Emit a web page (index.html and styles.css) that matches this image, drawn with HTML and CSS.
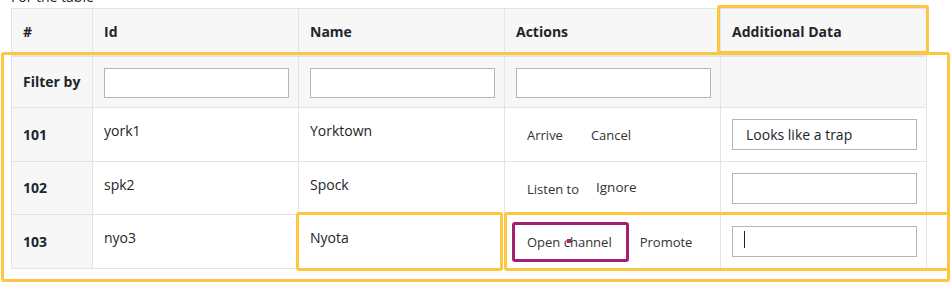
FILE: index.html
```html
<!DOCTYPE html>
<html lang="en">

<head>
    <meta charset="UTF-8">
    <meta name="viewport" content="width=device-width, initial-scale=1.0">
    <title>Crew table</title>
    <link rel="stylesheet" href="styles.css">
</head>

<body>
    <div class="sheet">
        <div class="caption">For the table</div>
        <table class="crew">
            <thead>
                <tr>
                    <th class="c-num">#</th>
                    <th class="c-id">Id</th>
                    <th class="c-name">Name</th>
                    <th class="c-actions">Actions</th>
                    <th class="c-extra">Additional Data</th>
                </tr>
            </thead>
            <tbody>
                <tr class="filters">
                    <th>Filter by</th>
                    <td><input type="text" class="field"></td>
                    <td><input type="text" class="field"></td>
                    <td><input type="text" class="field field-wide"></td>
                    <td></td>
                </tr>
                <tr>
                    <th>101</th>
                    <td>york1</td>
                    <td>Yorktown</td>
                    <td class="actions">
                        <div class="btn-row"><button class="link-btn">Arrive</button><button class="link-btn">Cancel</button></div>
                    </td>
                    <td><input type="text" class="field" value="Looks like a trap"></td>
                </tr>
                <tr class="short">
                    <th>102</th>
                    <td>spk2</td>
                    <td>Spock</td>
                    <td class="actions">
                        <div class="btn-row"><button class="link-btn">Listen to</button><button class="link-btn link-btn-tight">Ignore</button></div>
                    </td>
                    <td><input type="text" class="field"></td>
                </tr>
                <tr>
                    <th>103</th>
                    <td>nyo3</td>
                    <td>Nyota</td>
                    <td class="actions">
                        <div class="btn-row"><button class="link-btn">Open channel</button><button class="link-btn">Promote</button></div>
                    </td>
                    <td><input type="text" class="field"></td>
                </tr>
            </tbody>
        </table>

        <!-- highlight boxes drawn on top of the table -->
        <div class="mark mark-head"></div>
        <div class="mark mark-body"></div>
        <div class="mark mark-name"></div>
        <div class="mark mark-row"></div>
        <div class="mark mark-btn"></div>
        <div class="click-dot"></div>
        <div class="caret"></div>
    </div>
</body>

</html>
```

FILE: styles.css
```css
* {
    margin: 0;
    padding: 0;
    box-sizing: border-box;
}

body {
    font-family: "Open Sans", "Liberation Sans", sans-serif;
    font-size: 14px;
    color: #212529;
    background: #fff;
}

.sheet {
    position: relative;
    width: 951px;
    height: 286px;
    padding-left: 11px;
    overflow: hidden;
}

.caption {
    font-size: 14px;
    line-height: 20px;
    margin-top: -13px;
    margin-bottom: 1px;
}

.crew {
    width: 915px;
    border-collapse: collapse;
    table-layout: fixed;
}

.crew th,
.crew td {
    border: 1px solid #e3e4e8;
    padding: 11px 11px;
    line-height: 24px;
    text-align: left;
    vertical-align: top;
}

.crew th {
    font-weight: 700;
    white-space: nowrap;
}

.crew thead th {
    background: #f7f7f7;
    border-bottom: 2px solid #e3e4e8;
}

.c-num { width: 81px; }
.c-id { width: 206px; }
.c-name { width: 206px; }
.c-actions { width: 216px; }
.c-extra { width: 206px; }

.crew tbody th {
    background: #f7f7f7;
    vertical-align: middle;
}

.filters td {
    background: #f7f7f7;
    padding-top: 11px;
    padding-bottom: 9px;
}

.short td {
    padding-bottom: 10px;
}

.field {
    display: block;
    width: 185px;
    height: 31px;
    padding: 0 13px;
    border: 1px solid #b5b5b5;
    font-family: inherit;
    font-size: 14px;
    color: #212529;
    background: #fff;
    outline: none;
}

.filters .field {
    height: 30px;
}

.field-wide {
    width: 195px;
}

.crew .actions {
    padding-left: 9px;
}

.btn-row {
    display: flex;
    gap: 2px;
    padding-top: 1px;
}

.link-btn {
    flex-shrink: 0;
    white-space: nowrap;
    font-family: inherit;
    font-size: 13px;
    line-height: 20px;
    height: 30px;
    color: #333;
    background: none;
    border: 1px solid transparent;
    padding: 4px 12px;
    cursor: pointer;
}

.link-btn-tight {
    margin-left: -11px;
    margin-top: -2px;
    font-size: 13.5px;
}

.mark {
    position: absolute;
    border: 3px solid #fcc640;
    border-radius: 3px;
}

.mark-head {
    left: 717px;
    top: 5px;
    width: 212px;
    height: 49px;
}

.mark-body {
    left: 1px;
    top: 52px;
    width: 949px;
    height: 230px;
}

.mark-name {
    left: 296px;
    top: 212px;
    width: 207px;
    height: 59px;
}

.mark-row {
    left: 504px;
    top: 212px;
    width: 446px;
    height: 59px;
}

.mark-btn {
    left: 512px;
    top: 222px;
    width: 117px;
    height: 40px;
    border-color: #a61f6f;
    border-radius: 3px;
}

.click-dot {
    position: absolute;
    left: 567px;
    top: 239px;
    width: 4px;
    height: 4px;
    background: #b0206f;
}

.caret {
    position: absolute;
    left: 744px;
    top: 231px;
    width: 1px;
    height: 17px;
    background: #222;
}
```
